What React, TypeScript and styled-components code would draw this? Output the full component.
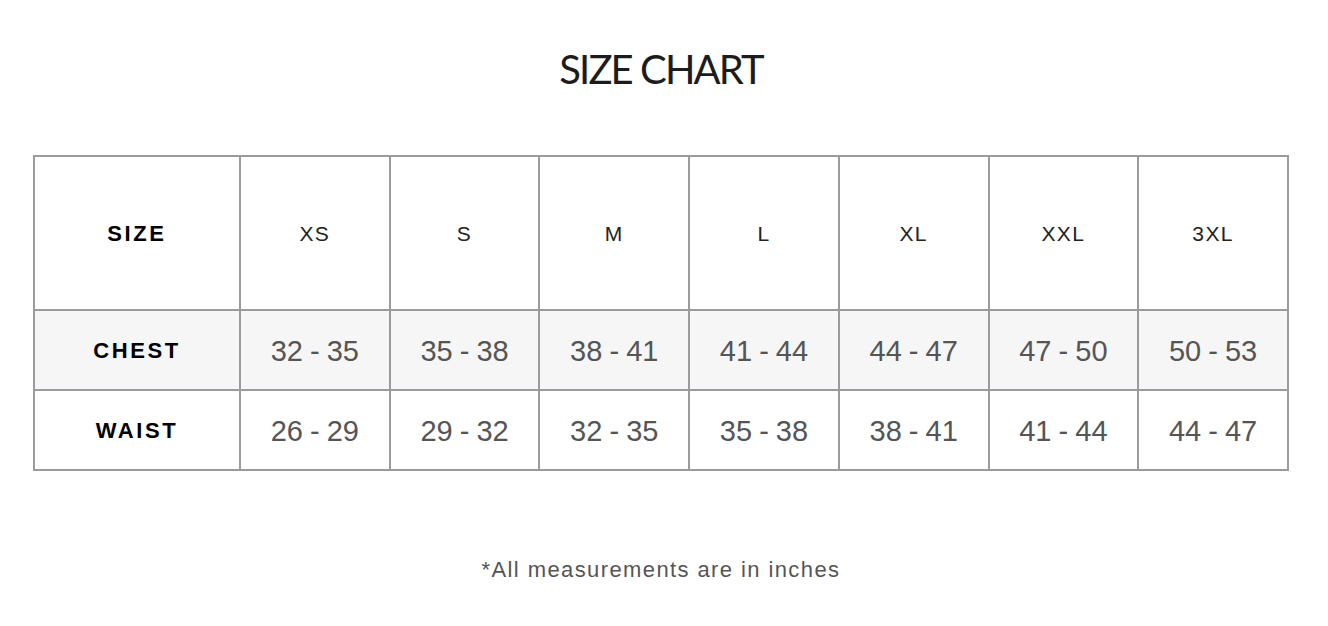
import React from "react";
import styled, { createGlobalStyle } from "styled-components";

const sizes = ["XS", "S", "M", "L", "XL", "XXL", "3XL"];

const rows = [
    { label: "CHEST", values: ["32 - 35", "35 - 38", "38 - 41", "41 - 44", "44 - 47", "47 - 50", "50 - 53"], shaded: true },
    { label: "WAIST", values: ["26 - 29", "29 - 32", "32 - 35", "35 - 38", "38 - 41", "41 - 44", "44 - 47"], shaded: false },
];

export default function App() {
    return (
        <>
            <GlobalStyle />
            <Page>
                <Title>SIZE CHART</Title>
                <Table>
                    <tbody>
                        <HeadRow>
                            <LabelCell>SIZE</LabelCell>
                            {sizes.map((s) => (
                                <SizeCell key={s}>{s}</SizeCell>
                            ))}
                        </HeadRow>
                        {rows.map((row) => (
                            <DataRow key={row.label} $shaded={row.shaded}>
                                <LabelCell>{row.label}</LabelCell>
                                {row.values.map((v, i) => (
                                    <ValueCell key={i}>{v}</ValueCell>
                                ))}
                            </DataRow>
                        ))}
                    </tbody>
                </Table>
                <Note>*All measurements are in inches</Note>
            </Page>
        </>
    );
}

const GlobalStyle = createGlobalStyle`
    body {
        margin: 0;
        background: #fff;
        font-family: "Liberation Sans", Arial, sans-serif;
    }
`;

const Page = styled.div`
    width: 1322px;
    display: flex;
    flex-direction: column;
    align-items: center;
    padding-top: 45px;
`;

const Title = styled.h1`
    margin: 0;
    font-family: Lato, "Liberation Sans", sans-serif;
    font-weight: 400;
    font-size: 40px;
    line-height: 48px;
    letter-spacing: -1.9px;
    color: #1c1c1c;
`;

const Table = styled.table`
    margin-top: 62px;
    width: 1256px;
    border-collapse: collapse;
    border: 2px solid #9b9b9f;
    table-layout: fixed;
`;

const HeadRow = styled.tr`
    height: 154px;
    background: #fff;
`;

const DataRow = styled.tr<{ $shaded: boolean }>`
    height: 80px;
    background: ${(p) => (p.$shaded ? "#f6f6f6" : "#fff")};
`;

const Cell = styled.td`
    border: 2px solid #9b9b9f;
    text-align: center;
    vertical-align: middle;
    padding: 0;
`;

const LabelCell = styled(Cell)`
    width: 204px;
    font-weight: 700;
    font-size: 22px;
    letter-spacing: 2.6px;
    color: #000;
    padding-top: 2px;
`;

const SizeCell = styled(Cell)`
    font-size: 21px;
    letter-spacing: 1.4px;
    color: #222;
    padding-top: 2px;
`;

const ValueCell = styled(Cell)`
    font-size: 29px;
    word-spacing: -1px;
    color: #555;
    padding-top: 2px;
`;

const Note = styled.p`
    margin: 86px 0 0;
    font-size: 22px;
    letter-spacing: 1.4px;
    color: #555;
`;
